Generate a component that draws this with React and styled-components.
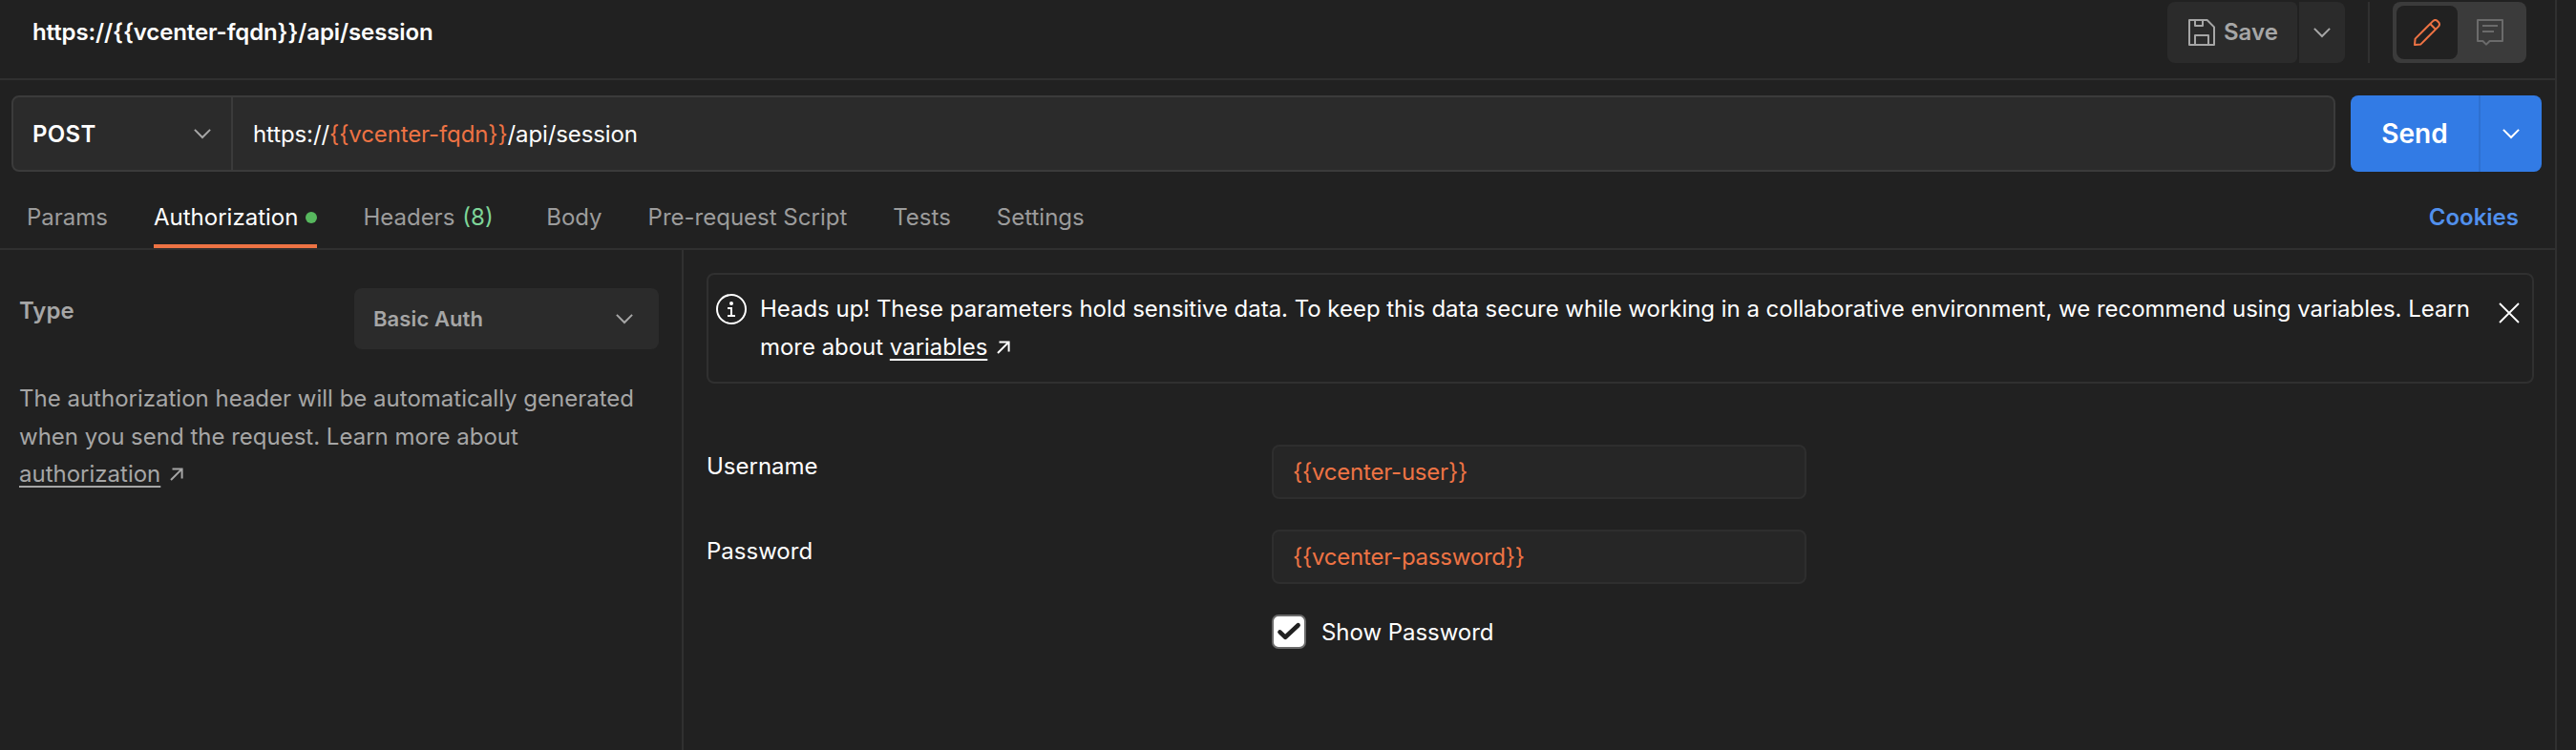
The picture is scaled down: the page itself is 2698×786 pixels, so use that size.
import React from 'react';
import styled, { createGlobalStyle } from 'styled-components';

const color = {
  bg: '#212121',
  raised: '#2b2b2b',
  field: '#262626',
  line: '#303030',
  strong: '#3b3b3b',
  text: '#ffffff',
  muted: '#a6a6a6',
  faint: '#6b6b6b',
  orange: '#ee7344',
  blue: '#327be5',
};

const GlobalStyle = createGlobalStyle`
  *, *::before, *::after { box-sizing: border-box; }
  html, body, #root { height: 100%; }
  body {
    margin: 0;
    background: ${color.bg};
    color: ${color.text};
    font-family: Inter, "Liberation Sans", sans-serif;
    font-size: 24px;
    line-height: 40px;
    overflow: hidden;
    -webkit-font-smoothing: antialiased;
  }
  svg { display: block; flex: none; }
  button { font: inherit; border: 0; padding: 0; background: none; color: inherit; }
`;

const Page = styled.div`
  display: flex;
  flex-direction: column;
  width: 2678px;
  height: 786px;
  border-right: 2px solid ${color.line};
`;

const Header = styled.header`
  display: flex;
  align-items: flex-start;
  height: 84px;
  padding: 2px 30px 0 34px;
  border-bottom: 2px solid ${color.line};
`;

const Title = styled.h1`
  flex: 1;
  margin: 0;
  padding-top: 12px;
  font-size: 24px;
  font-weight: 600;
  line-height: 40px;
  letter-spacing: -0.1px;
`;

const ButtonGroup = styled.div`
  display: flex;
  gap: 2px;
  height: 64px;
`;

const SaveButton = styled.button`
  display: flex;
  align-items: center;
  gap: 9px;
  width: 136px;
  padding-left: 22px;
  border-radius: 8px 6px 6px 8px;
  background: ${color.raised};
  color: ${color.muted};
  font-weight: 600;
`;

const SaveMenuButton = styled.button`
  display: grid;
  place-items: center;
  width: 48px;
  border-radius: 0 8px 8px 0;
  background: ${color.raised};
  color: ${color.muted};
`;

const Divider = styled.div`
  width: 2px;
  height: 64px;
  margin: 0 24px;
  background: ${color.line};
`;

const ModeSwitch = styled.div`
  display: flex;
  width: 140px;
  height: 64px;
  padding: 4px;
  border-radius: 8px;
  background: ${color.strong};
`;

const ModeButton = styled.button`
  display: grid;
  place-items: center;
  width: ${(p) => (p.$active ? 64 : 68)}px;
  height: 56px;
  border-radius: 8px;
  background: ${(p) => (p.$active ? color.bg : 'transparent')};
  color: ${(p) => (p.$active ? color.orange : color.faint)};
`;

const RequestBar = styled.section`
  display: flex;
  gap: 16px;
  height: 96px;
  padding: 16px 14px 0 12px;
`;

const UrlBox = styled.div`
  display: flex;
  flex: 1;
  height: 80px;
  border: 2px solid ${color.strong};
  border-radius: 8px;
  background: ${color.raised};
`;

const MethodSelect = styled.div`
  display: flex;
  align-items: center;
  justify-content: space-between;
  width: 230px;
  padding: 0 20px 0 20px;
  border-right: 2px solid ${color.strong};
  color: ${color.text};

  svg { color: ${color.muted}; }
`;

const MethodName = styled.span`
  padding-top: 2px;
  font-weight: 600;
  letter-spacing: 0.3px;
`;

const UrlText = styled.div`
  padding: 19px 0 0 21px;
  letter-spacing: -0.11px;
  white-space: nowrap;
`;

const Variable = styled.span`
  color: ${color.orange};
`;

const SendGroup = styled.div`
  display: flex;
  width: 200px;
  height: 80px;
  border-radius: 8px;
  background: ${color.blue};
`;

const SendButton = styled.button`
  width: 134px;
  font-size: 28px;
  font-weight: 600;
`;

const SendMenuButton = styled.button`
  display: grid;
  place-items: center;
  width: 66px;
  border-left: 2px solid #2e70d1;
`;

const TabBar = styled.nav`
  display: flex;
  gap: 48px;
  height: 82px;
  padding: 0 38px 0 28px;
  border-bottom: 2px solid ${color.line};
`;

const Tab = styled.div`
  display: flex;
  align-items: center;
  gap: 8px;
  height: 80px;
  padding-top: 20px;
  border-bottom: 4px solid ${(p) => (p.$active ? color.orange : 'transparent')};
  color: ${(p) => (p.$active ? color.text : '#9c9c9c')};
  white-space: nowrap;
`;

const StatusDot = styled.i`
  width: 12px;
  height: 12px;
  border-radius: 50%;
  background: #57b85e;
`;

const Count = styled.span`
  margin-right: 7.5px;
  color: #7ed598;
`;

const CookiesLink = styled.a`
  margin-left: auto;
  padding-top: 28px;
  color: #5190ec;
  font-weight: 600;
`;

const Panels = styled.main`
  display: flex;
  flex: 1;
`;

const TypePanel = styled.aside`
  width: 716px;
  padding: 40px 24px 0 20px;
  border-right: 2px solid ${color.line};
  color: ${color.muted};
`;

const TypeRow = styled.div`
  display: flex;
  align-items: flex-start;
  justify-content: space-between;
  height: 64px;
`;

const TypeLabel = styled.div`
  padding-top: 4px;
  font-weight: 600;
`;

const TypeSelect = styled.div`
  display: flex;
  align-items: center;
  justify-content: space-between;
  width: 319px;
  height: 64px;
  padding: 0 26px 0 20px;
  border-radius: 8px;
  background: ${color.raised};
  font-size: 22px;
  font-weight: 600;
  letter-spacing: 0.1px;
`;

const Description = styled.p`
  margin: 32px 0 0;
  line-height: 39.6px;
`;

const DocLink = styled.a`
  text-decoration: underline;
  text-decoration-thickness: 2px;
  text-underline-offset: 4px;
  text-decoration-skip-ink: none;
`;

const LinkArrow = styled.svg`
  && { display: inline-block; }
  margin-left: 10px;
  vertical-align: 1px;
`;

const AuthPanel = styled.section`
  flex: 1;
  padding: 24px 22px 0 24px;
`;

const Notice = styled.div`
  display: flex;
  height: 116px;
  padding: 15px 12px 0 8px;
  border: 2px solid ${color.line};
  border-radius: 8px;

  > svg:first-child { margin-top: 5px; }
  > svg:last-child { margin-top: 13px; }
`;

const NoticeText = styled.p`
  flex: 1;
  margin: 1px 20px 0 14px;
  letter-spacing: -0.03px;
`;

const Field = styled.div`
  display: flex;
  height: 57px;
  margin-top: ${(p) => p.$gap}px;
`;

const FieldLabel = styled.label`
  width: 592px;
  padding-top: 3px;
`;

const FieldInput = styled.div`
  width: 560px;
  height: 57px;
  padding: 7px 0 0 20px;
  border: 2px solid #2e2e2e;
  border-radius: 8px;
  background: ${color.field};
  color: ${color.orange};
  letter-spacing: -0.22px;
`;

const ShowPassword = styled.div`
  display: flex;
  align-items: center;
  gap: 16px;
  height: 36px;
  margin: 32px 0 0 592px;
`;

const ShowPasswordLabel = styled.span`
  padding-top: 2px;
  letter-spacing: -0.05px;
`;

const Checkbox = styled.span`
  display: grid;
  place-items: center;
  width: 36px;
  height: 36px;
  border: 2px solid ${color.faint};
  border-radius: 7px;
  background: #fff;
  color: ${color.bg};
`;

const Chevron = () => (
  <svg width="20" height="12" viewBox="0 0 20 12" fill="none" stroke="currentColor" strokeWidth="2">
    <path d="M1.9 1.9 10 10l8.1-8.1" />
  </svg>
);

const SaveIcon = () => (
  <svg width="28" height="28" viewBox="0 0 28 28" fill="none" stroke="currentColor" strokeWidth="2" strokeLinejoin="round">
    <path d="M1 1h18.6L27 8.4V27H1Z" />
    <path d="M7 1v6h8V1M7 27V17h14v10" />
  </svg>
);

const PencilIcon = () => (
  <svg width="28" height="28" viewBox="0 0 28 28" fill="none" stroke="currentColor" strokeWidth="2" strokeLinejoin="round">
    <path d="M1 27 1.6 20.6 20.4 1.9q2.2-1.8 4.4.1l1.2 1.2q1.9 2.2.1 4.4L7.4 26.4 1 27Z" />
    <path d="m17.3 5 5.7 5.7" />
  </svg>
);

const CommentIcon = () => (
  <svg width="28" height="28" viewBox="0 0 28 28" fill="none" stroke="currentColor" strokeWidth="2" strokeLinejoin="round">
    <path d="M1 1h26v22H13.6L10 26.6 6.4 23H1Z" />
    <path d="M6 7h16M6 13h12" />
  </svg>
);

const InfoIcon = () => (
  <svg width="32" height="32" viewBox="0 0 32 32" fill="none" stroke="currentColor" strokeWidth="2">
    <circle cx="16" cy="16" r="15" />
    <path d="M12 15h4v8M12 23h8" />
    <circle cx="16" cy="10" r="2" fill="currentColor" stroke="none" />
  </svg>
);

const CloseIcon = () => (
  <svg width="24" height="24" viewBox="0 0 24 24" fill="none" stroke="currentColor" strokeWidth="1.8">
    <path d="m2 2 20 20M22 2 2 22" />
  </svg>
);

const Arrow = () => (
  <LinkArrow width="14" height="14" viewBox="0 0 14 14" fill="none" stroke="currentColor" strokeWidth="2">
    <path d="M2.5 1.4H12.6V11.5M12.4 1.6 1 13" />
  </LinkArrow>
);

const CheckIcon = () => (
  <svg width="32" height="32" viewBox="2 2 32 32" fill="none" stroke="currentColor" strokeWidth="4.6" strokeLinecap="round" strokeLinejoin="round">
    <path d="m8.5 18.4 5.7 5.4L27.6 11.2" />
  </svg>
);

export default function App() {
  return (
    <>
      <GlobalStyle />
      <Page>
        <Header>
          <Title>{'https://{{vcenter-fqdn}}/api/session'}</Title>
          <ButtonGroup>
            <SaveButton><SaveIcon />Save</SaveButton>
            <SaveMenuButton><Chevron /></SaveMenuButton>
          </ButtonGroup>
          <Divider />
          <ModeSwitch>
            <ModeButton $active><PencilIcon /></ModeButton>
            <ModeButton><CommentIcon /></ModeButton>
          </ModeSwitch>
        </Header>

        <RequestBar>
          <UrlBox>
            <MethodSelect><MethodName>POST</MethodName><Chevron /></MethodSelect>
            <UrlText>https://<Variable>{'{{vcenter-fqdn}}'}</Variable>/api/session</UrlText>
          </UrlBox>
          <SendGroup>
            <SendButton>Send</SendButton>
            <SendMenuButton><Chevron /></SendMenuButton>
          </SendGroup>
        </RequestBar>

        <TabBar>
          <Tab>Params</Tab>
          <Tab $active>Authorization<StatusDot /></Tab>
          <Tab>Headers<Count>(8)</Count></Tab>
          <Tab>Body</Tab>
          <Tab>Pre-request Script</Tab>
          <Tab>Tests</Tab>
          <Tab>Settings</Tab>
          <CookiesLink>Cookies</CookiesLink>
        </TabBar>

        <Panels>
          <TypePanel>
            <TypeRow>
              <TypeLabel>Type</TypeLabel>
              <TypeSelect>Basic Auth<Chevron /></TypeSelect>
            </TypeRow>
            <Description>
              The authorization header will be automatically generated when you send the request. Learn more about{' '}
              <DocLink>authorization</DocLink><Arrow />
            </Description>
          </TypePanel>

          <AuthPanel>
            <Notice>
              <InfoIcon />
              <NoticeText>
                Heads up! These parameters hold sensitive data. To keep this data secure while working in a
                collaborative environment, we recommend using variables. Learn more about{' '}
                <DocLink>variables</DocLink><Arrow />
              </NoticeText>
              <CloseIcon />
            </Notice>
            <Field $gap={64}>
              <FieldLabel>Username</FieldLabel>
              <FieldInput>{'{{vcenter-user}}'}</FieldInput>
            </Field>
            <Field $gap={32}>
              <FieldLabel>Password</FieldLabel>
              <FieldInput>{'{{vcenter-password}}'}</FieldInput>
            </Field>
            <ShowPassword>
              <Checkbox><CheckIcon /></Checkbox>
              <ShowPasswordLabel>Show Password</ShowPasswordLabel>
            </ShowPassword>
          </AuthPanel>
        </Panels>
      </Page>
    </>
  );
}
